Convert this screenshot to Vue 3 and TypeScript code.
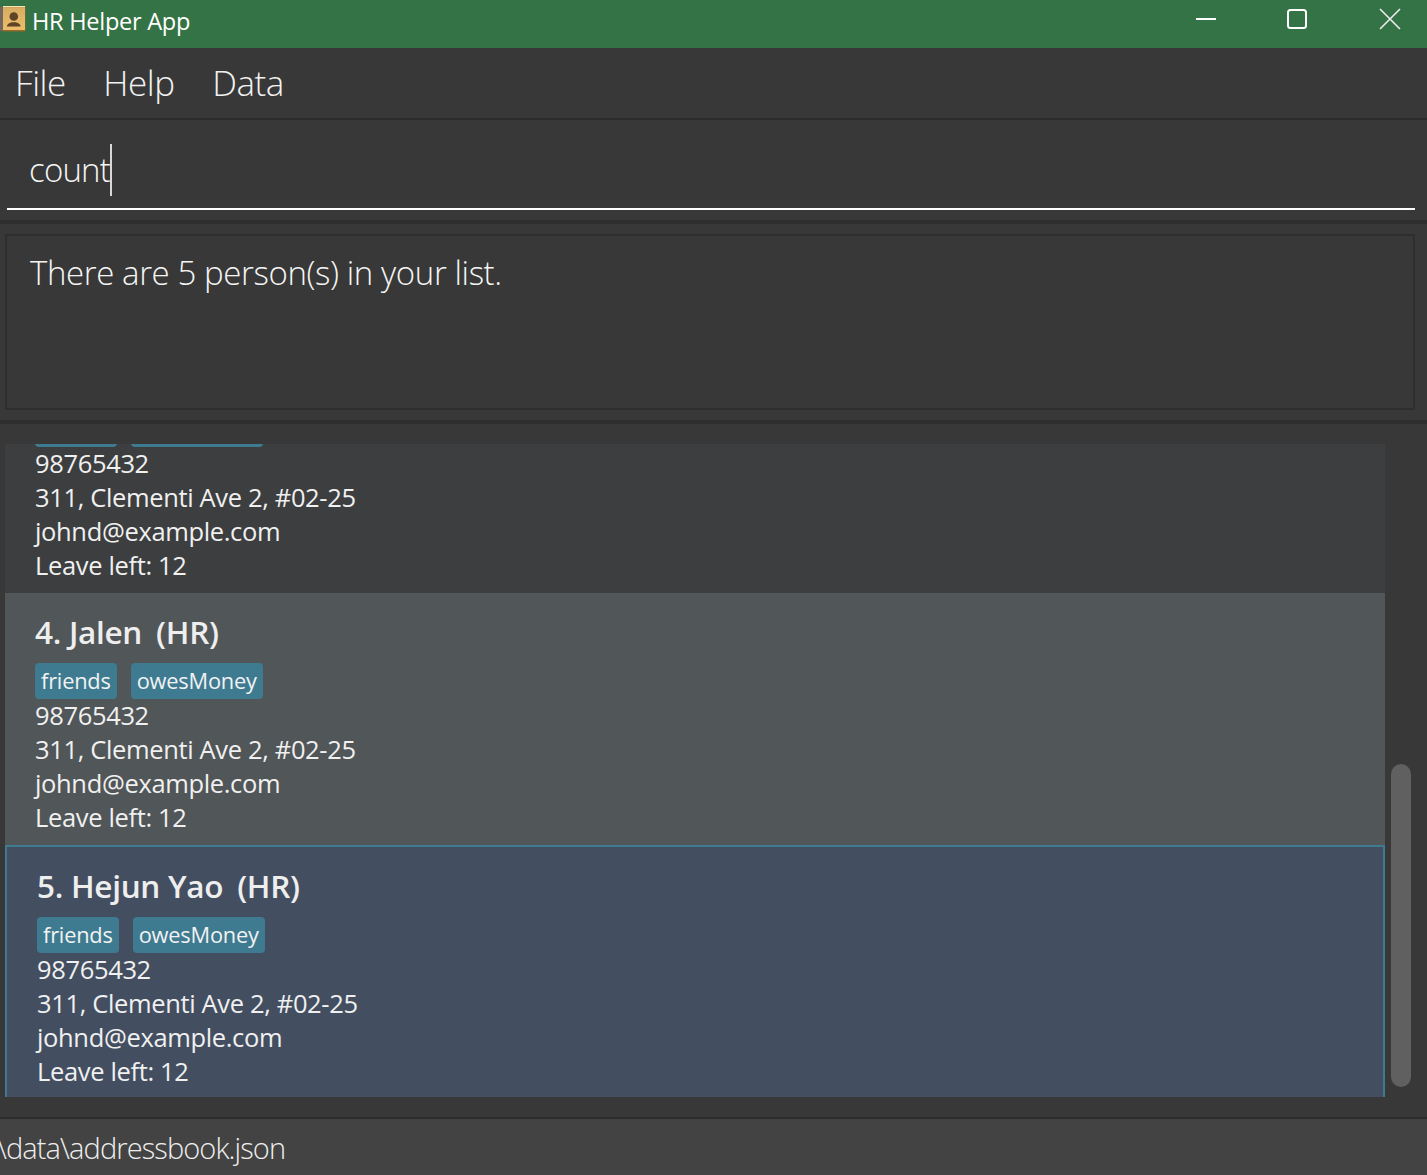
<script setup lang="ts">
interface Person { idx: number; name: string; state: string }
const people: Person[] = [
  { idx: 3, name: 'Ben', state: 'plain' },
  { idx: 4, name: 'Jalen', state: 'hover' },
  { idx: 5, name: 'Hejun Yao', state: 'selected' },
]
const tags = ['friends', 'owesMoney']
</script>

<template>
  <div class="app">
    <header class="titlebar">
      <svg class="logo" width="26" height="26" viewBox="0 0 26 26">
        <defs>
          <linearGradient id="bk" x1="0" y1="0" x2="0" y2="1">
            <stop offset="0" stop-color="#d8ad62" />
            <stop offset="1" stop-color="#ecbe6a" />
          </linearGradient>
        </defs>
        <rect x="0" y="1" width="3" height="24" fill="#75675f" />
        <rect x="3" y="0" width="22.500" height="25.500" fill="#96682a" />
        <rect x="3" y="0" width="22" height="1.200" fill="#f5e4b8" />
        <rect x="3" y="1.200" width="22" height="22.800" fill="url(#bk)" />
        <circle cx="13.800" cy="10.500" r="4.300" fill="#5e4426" />
        <path d="M7 20.500c0-2.800 2.800-3.600 5-4.300h3.600c2.200.7 5 1.500 5 4.300z" fill="#5e4426" />
      </svg>
      <span class="app-name">HR Helper App</span>
      <div class="win-controls">
        <svg width="22" height="22" viewBox="0 0 22 22"><path d="M1 11h20" stroke="#fff" stroke-width="2" /></svg>
        <svg width="22" height="22" viewBox="0 0 22 22"><rect x="2" y="2" width="18" height="18" rx="2.500" fill="none" stroke="#fff" stroke-width="2" /></svg>
        <svg class="close" width="22" height="22" viewBox="0 0 22 22"><path d="M1 1l20 20M21 1L1 21" stroke="#eee" stroke-width="1.600" /></svg>
      </div>
    </header>
    <nav class="menu">
      <span>File</span><span>Help</span><span>Data</span>
    </nav>
    <section class="command">
      <div class="field"><span>count</span><i class="caret"></i></div>
    </section>
    <section class="result">
      <div class="result-box">There are 5 person(s) in your list.</div>
    </section>
    <section class="list-pane">
      <div class="viewport">
        <div class="scroller">
          <article v-for="p in people" :key="p.idx" class="card" :class="p.state">
            <div class="title"><span>{{ p.idx }}. {{ p.name }}</span><span>(HR)</span></div>
            <div class="tags"><span v-for="t in tags" :key="t" class="tag">{{ t }}</span></div>
            <div class="line">98765432</div>
            <div class="line">311, Clementi Ave 2, #02-25</div>
            <div class="line">johnd@example.com</div>
            <div class="line">Leave left: 12</div>
          </article>
        </div>
      </div>
      <div class="track"><div class="thumb"></div></div>
    </section>
    <footer class="status"><span>\data\addressbook.json</span></footer>
  </div>
</template>

<style>
html, body { background: #383838; }
</style>

<style scoped>
.app { width: 1427px; height: 1175px; display: flex; flex-direction: column; background: #383838; color: #fff; font-family: "Open Sans", "Noto Sans", sans-serif; overflow: hidden; }
.titlebar { height: 48px; flex: none; background: #347345; display: flex; align-items: center; }
.logo { margin: -10px 0 0 0; flex: none; }
.app-name { margin-left: 6px; margin-top: -7px; font-size: 23.600px; letter-spacing: -0.300px; }
.win-controls { margin-left: auto; display: flex; gap: 69px; padding: 0 26px 10px 0; }
.win-controls .close { margin-left: 2px; }
.menu { height: 70px; flex: none; box-sizing: content-box; display: flex; align-items: center; gap: 37.500px; padding: 0 0 0 15px; border-bottom: 2px solid #2c2c2c; font-size: 35px; line-height: 68px; font-weight: 300; letter-spacing: -0.450px; color: #f2f2f2; }
.command { height: 104px; flex: none; box-sizing: border-box; border-bottom: 4px solid #2e2e2e; padding: 0 12px 0 7px; }
.field { height: 90px; box-sizing: border-box; border-bottom: 2px solid #fff; display: flex; align-items: center; padding: 10px 0 0 22px; font-size: 33px; font-weight: 300; letter-spacing: -0.800px; color: #f5f5f5; }
.caret { width: 2px; height: 52px; background: #d8d8d8; margin-top: 1px; }
.result { height: 200px; flex: none; box-sizing: border-box; border-bottom: 4px solid #2e2e2e; padding: 10px 12px 10px 5px; }
.result-box { height: 176px; box-sizing: border-box; border: 2px solid #2e2e2e; padding: 13px 0 0 23px; font-size: 33px; line-height: 48px; font-weight: 300; letter-spacing: -0.400px; color: #f5f5f5; }
.list-pane { height: 693px; flex: none; display: flex; box-sizing: border-box; padding: 20px 0 20px 5px; }
.viewport { width: 1380px; height: 653px; overflow: hidden; flex: none; }
.scroller { margin-top: -103px; }
.card { height: 252px; box-sizing: border-box; padding: 20px 0 0 30px; overflow: hidden; }
.card.plain { background: #3c3e3f; }
.card.hover { background: #515658; }
.card.selected { height: 254px; background: #434f60; border: 2px solid #3e7b91; }
.title { height: 36px; display: flex; gap: 14px; align-items: center; font-size: 31.500px; font-weight: 600; letter-spacing: -0.300px; color: #eeeeee; margin-bottom: 14px; }
.tags { display: flex; gap: 14px; height: 36px; margin-bottom: -1px; }
.tag { background: #3e7b91; border-radius: 4px; padding: 0 6px; height: 36px; font-size: 21.800px; line-height: 36px; letter-spacing: -0.200px; color: #f2f2f2; }
.line { height: 34px; line-height: 34px; font-size: 25.500px; letter-spacing: -0.350px; color: #f0f0f0; }
.track { flex: 1; padding: 320px 16px 0 6px; }
.thumb { height: 323px; background: #606060; border-radius: 10px; }
.status { flex: 1; background: #434343; border-top: 2px solid #2c2c2c; display: flex; align-items: center; padding-top: 1px; font-size: 29px; font-weight: 300; letter-spacing: -0.900px; color: #eee; overflow: hidden; }
.status span { margin-left: -3px; }
</style>
